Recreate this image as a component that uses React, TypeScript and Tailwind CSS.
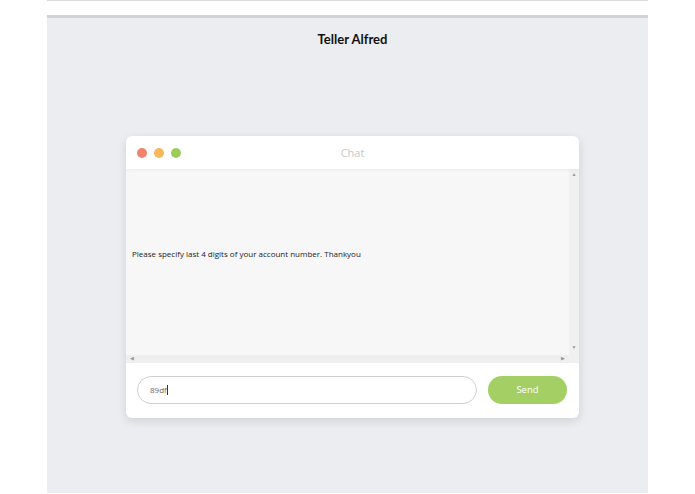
import React from 'react';

export default function App() {
  return (
    <div className="min-h-[494px] w-[695px] bg-white font-['Open_Sans',sans-serif]">
      <div className="mx-auto w-[601px] h-px bg-[#dcdcdc]" />
      <div className="mx-auto mt-[14px] w-[601px] h-[478px] bg-[#ecedf0] border-t-[3px] border-[#d3d3d5] flex flex-col items-center">
        <h1 className="mt-[13px] ml-[10px] text-[13px] leading-[16px] font-bold text-[#111] font-['Lato',sans-serif]">
          Teller Alfred
        </h1>

        {/* chat window */}
        <div className="mt-[89px] ml-[10px] w-[453px] h-[282px] bg-white rounded-[6px] shadow-[0_3px_10px_rgba(0,0,0,0.12)] flex flex-col overflow-hidden">
          <div className="relative h-[33px] flex items-center px-[11px] gap-[7px] shadow-[0_1px_3px_rgba(0,0,0,0.05)]">
            <span className="w-[10px] h-[10px] rounded-full bg-[#f0826e]" />
            <span className="w-[10px] h-[10px] rounded-full bg-[#f7b95a]" />
            <span className="w-[10px] h-[10px] rounded-full bg-[#9ccc5c]" />
            <span className="absolute left-0 right-0 pt-[2px] text-center text-[11px] text-[#c8c8c8]">Chat</span>
          </div>

          <div className="flex h-[194px]">
            <div className="flex-1 flex flex-col">
              <div className="flex-1 bg-[#f7f7f7] px-[6px] pt-[79px]">
                <p className="text-[8px] leading-[11px] text-[#222]">
                  Please specify last 4 digits of your account number. Thankyou
                </p>
              </div>
              <div className="h-[8px] bg-[#efefef] flex items-center justify-between px-[4px] text-[5px] text-[#999]">
                <span>◀</span>
                <span>▶</span>
              </div>
            </div>
            <div className="w-[10px] bg-[#f0f0f0] flex flex-col items-center justify-between pt-[2px] pb-[12px] text-[5px] text-[#999]">
              <span>▲</span>
              <span>▼</span>
            </div>
          </div>

          <div className="flex-1 flex items-center px-[11px] gap-[11px] pb-[1px]">
            <div className="w-[340px] h-[28px] rounded-full border border-[#cfcfcf] flex items-center px-[12px] text-[8px] text-[#666]">
              89df<span className="w-px h-[10px] bg-[#333]" />
            </div>
            <button className="w-[79px] h-[28px] rounded-full bg-[#a3cf64] text-white text-[9.5px]">
              Send
            </button>
          </div>
        </div>
      </div>
    </div>
  );
}
